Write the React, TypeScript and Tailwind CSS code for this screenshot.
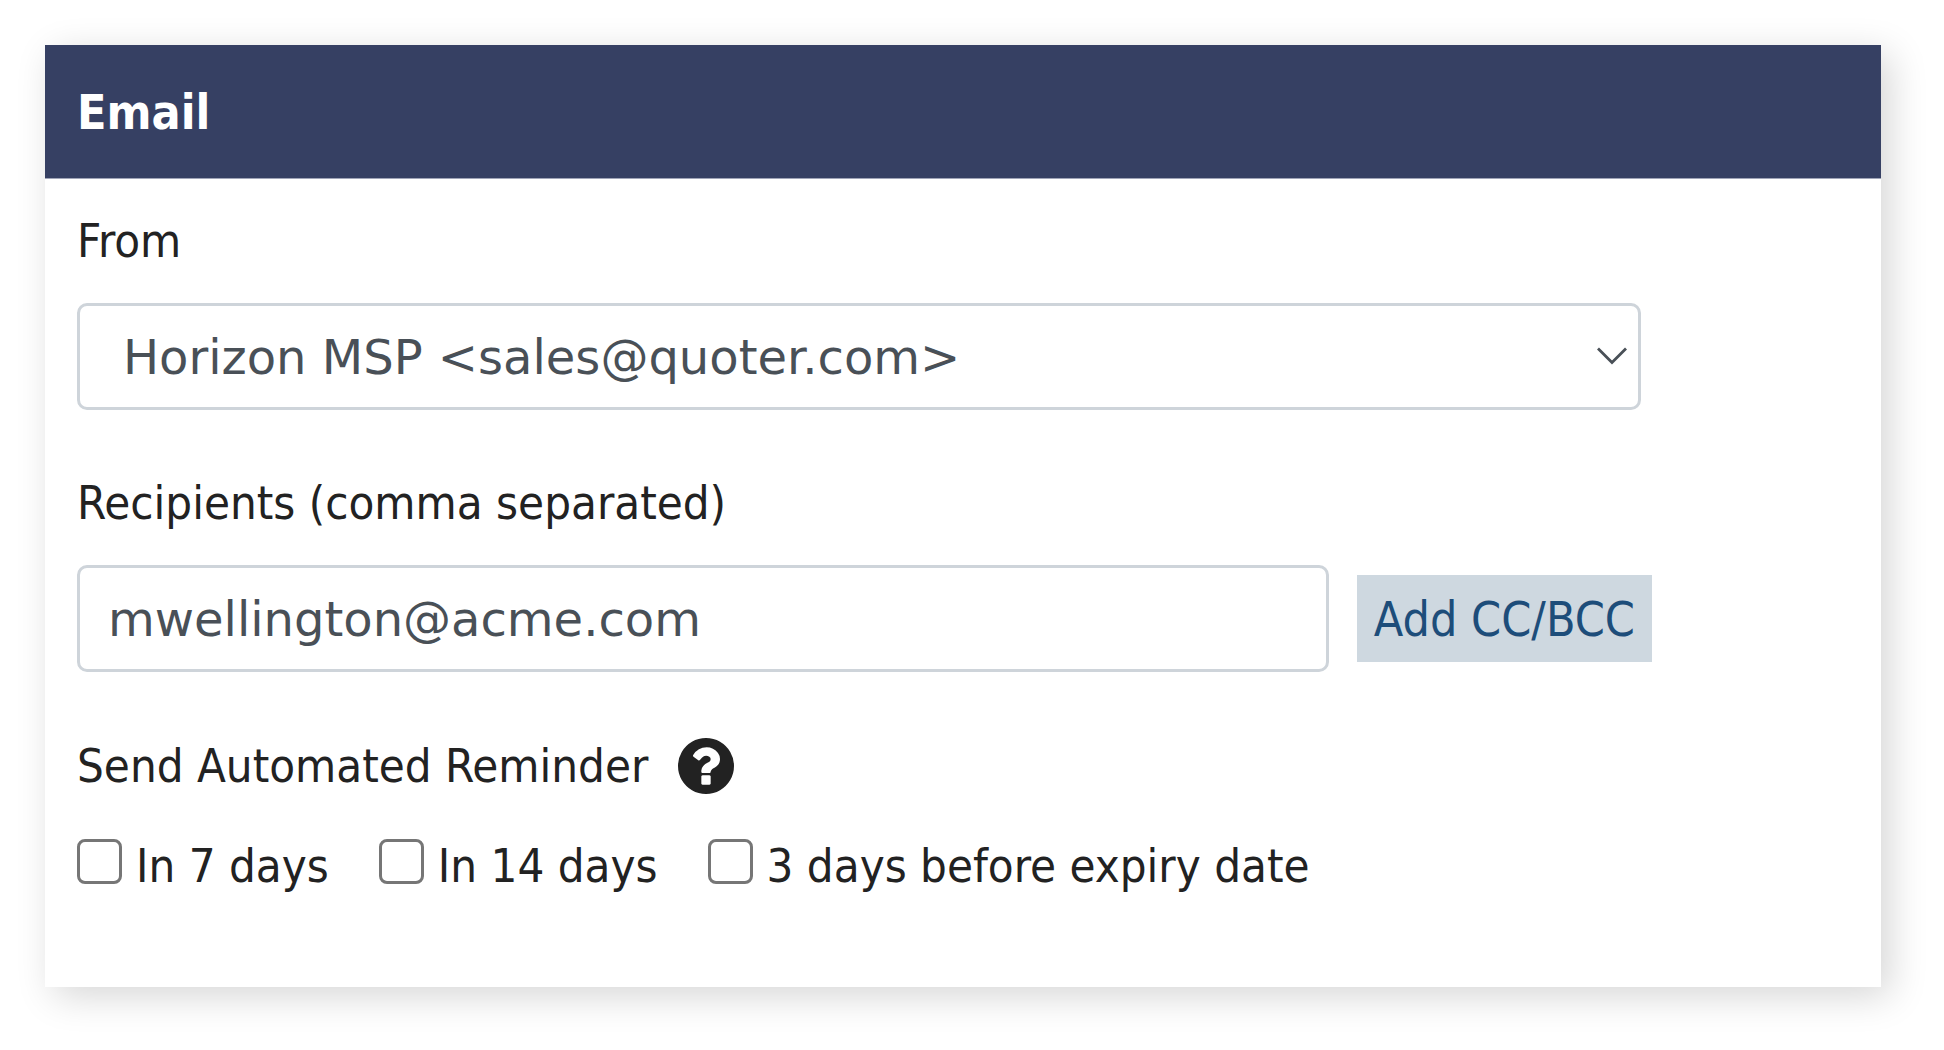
import React, { useState } from 'react';

const SENDERS = ['Horizon MSP <sales@quoter.com>'];

const REMINDERS = [
  { id: 'seven', label: 'In 7 days' },
  { id: 'fourteen', label: 'In 14 days' },
  { id: 'expiry', label: '3 days before expiry date' },
];

const QuestionIcon: React.FC = () => (
  <svg viewBox="128 128 1536 1536" className="size-14" fill="currentColor" aria-hidden="true">
    <path d="M1024 1376v-192q0-14-9-23t-23-9h-192q-14 0-23 9t-9 23v192q0 14 9 23t23 9h192q14 0 23-9t9-23zm256-672q0-88-55.5-163t-138.5-116-170-41q-243 0-371 213-15 24 8 42l132 100q7 6 19 6 16 0 25-12 53-68 86-92 34-24 86-24 48 0 85.5 26t37.5 59q0 38-20 61t-68 45q-63 28-115.5 86.5t-52.5 125.5v36q0 14 9 23t23 9h192q14 0 23-9t9-23q0-19 21.5-49.5t54.5-49.5q32-18 49-28.5t46-35 44.5-48 28-60.5 12.5-81zm384 192q0 209-103 385.5t-279.5 279.5-385.5 103-385.5-103-279.5-279.5-103-385.5 103-385.5 279.5-279.5 385.5-103 385.5 103 279.5 279.5 103 385.5z" />
  </svg>
);

const App: React.FC = () => {
  const [from, setFrom] = useState(SENDERS[0]);
  const [recipients, setRecipients] = useState('mwellington@acme.com');
  const [reminders, setReminders] = useState<string[]>([]);

  const toggleReminder = (id: string) => {
    setReminders((prev) => (prev.includes(id) ? prev.filter((r) => r !== id) : [...prev, id]));
  };

  return (
    <main className="min-h-screen bg-white pt-[45px] pr-[63px] pb-[63px] pl-[45px] font-['DejaVu_Sans_Condensed','DejaVu_Sans',sans-serif] text-[47px] leading-[72px] text-[#222222]">
      <section className="bg-white shadow-[9px_9px_36px_rgba(0,0,0,0.165)]">
        <header className="border-b border-[#a0a5b8] bg-[#364063] px-8 pt-[31px] pb-[30px]">
          <h1 className="text-[48px] font-bold text-white">Email</h1>
        </header>

        <form className="px-8 pt-[26px] pb-[85px]" onSubmit={(e) => e.preventDefault()}>
          {/* From */}
          <div className="mb-[57px] pr-[208px]">
            <label htmlFor="from" className="mb-[26px] block">
              From
            </label>
            <div className="relative">
              <select
                id="from"
                value={from}
                onChange={(e) => setFrom(e.target.value)}
                className="block h-[107px] w-full appearance-none rounded-[10px] border-3 border-[#ced4da] bg-white pr-20 pl-[43px] font-['DejaVu_Sans',sans-serif] text-[48px] text-[#495057]"
              >
                {SENDERS.map((sender) => (
                  <option key={sender} value={sender}>
                    {sender}
                  </option>
                ))}
              </select>
              <svg
                viewBox="0 0 30 18"
                className="pointer-events-none absolute top-[44px] right-[14px] h-[18px] w-[30px]"
                fill="none"
                stroke="#495057"
                strokeWidth="2.8"
              >
                <path d="M1 1.5 15 15.5 29 1.5" />
              </svg>
            </div>
          </div>

          {/* Recipients */}
          <div className="mb-[58px] pr-[197px]">
            <label htmlFor="recipients" className="mb-[26px] block">
              Recipients (comma separated)
            </label>
            <div className="flex items-center gap-7">
              <input
                id="recipients"
                type="text"
                value={recipients}
                onChange={(e) => setRecipients(e.target.value)}
                className="h-[107px] min-w-0 flex-1 rounded-[10px] border-3 border-[#ced4da] bg-white px-7 font-['DejaVu_Sans',sans-serif] text-[48px] text-[#495057]"
              />
              <button
                type="button"
                className="h-[87px] bg-[#ced8e0] px-[17px] text-[48px] whitespace-nowrap text-[#1d4d7a]"
              >
                Add CC/BCC
              </button>
            </div>
          </div>

          {/* Reminders */}
          <fieldset>
            <legend className="mb-7 flex items-center gap-[30px]">
              Send Automated Reminder
              <QuestionIcon />
            </legend>
            <div className="flex flex-wrap gap-x-[50px]">
              {REMINDERS.map(({ id, label }) => (
                <label key={id} className="flex items-center gap-[14px]">
                  <input
                    type="checkbox"
                    checked={reminders.includes(id)}
                    onChange={() => toggleReminder(id)}
                    className="mb-[10px] size-[45px] appearance-none rounded-[8px] border-3 border-[#767676] bg-white checked:bg-[#364063]"
                  />
                  {label}
                </label>
              ))}
            </div>
          </fieldset>
        </form>
      </section>
    </main>
  );
};

export default App;
